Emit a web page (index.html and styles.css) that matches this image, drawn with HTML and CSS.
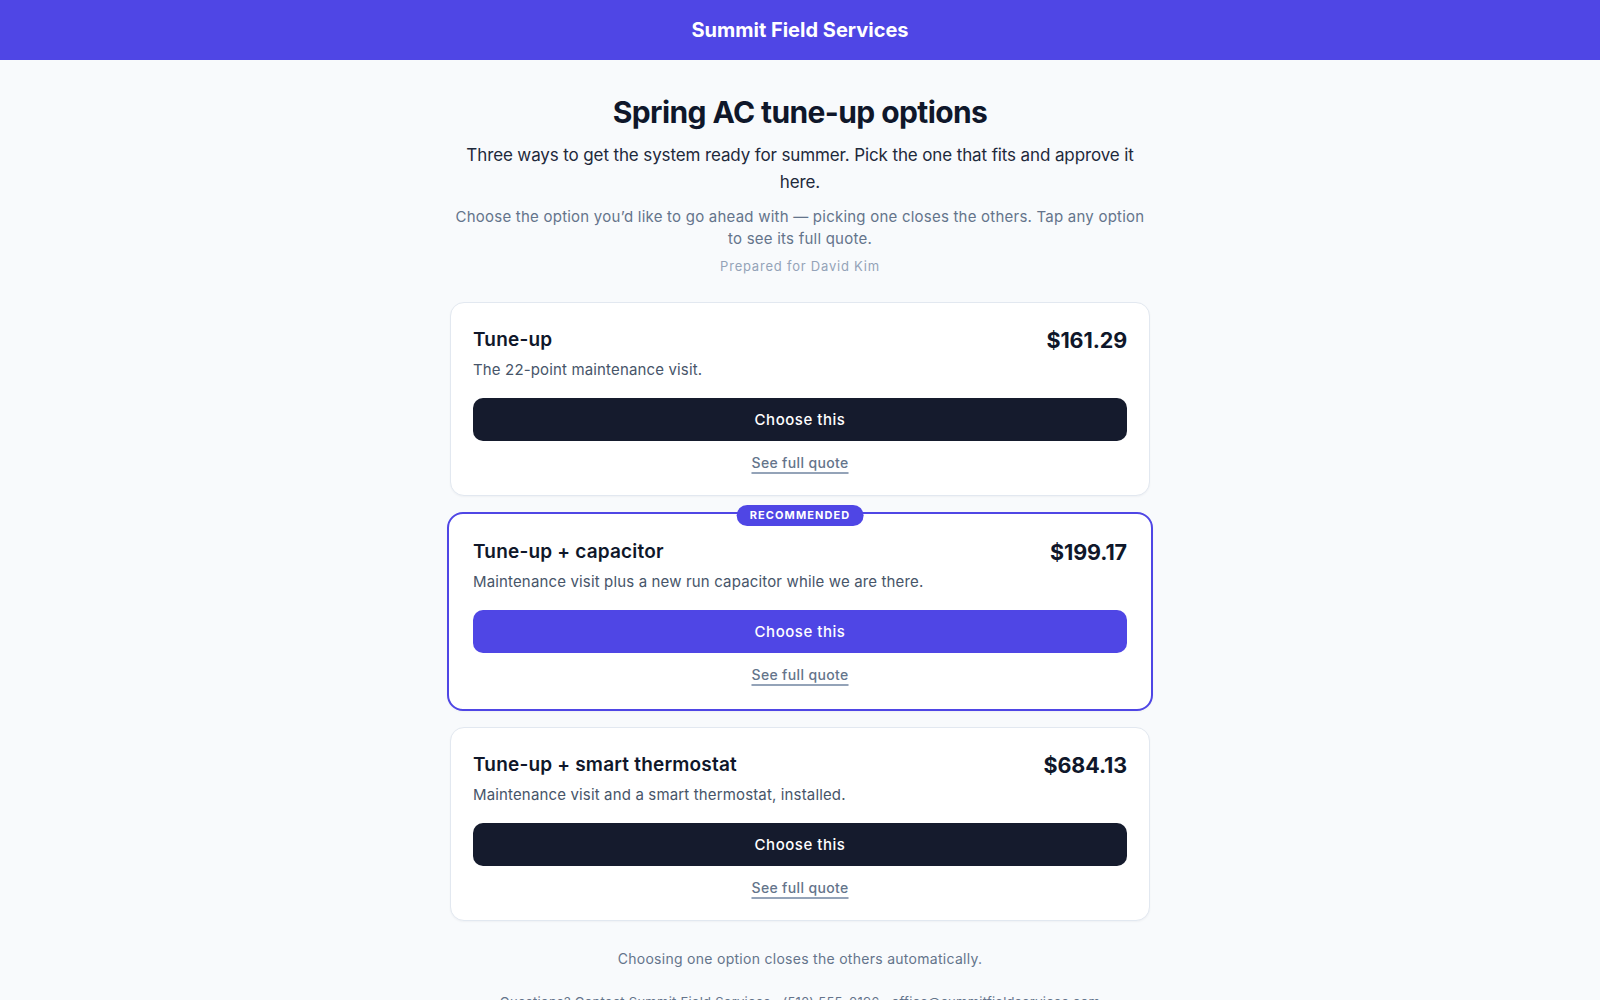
FILE: index.html
```html
<!DOCTYPE html>
<html lang="en">
<head>
<meta charset="utf-8">
<title>Spring AC tune-up options</title>
<link rel="stylesheet" href="styles.css">
</head>
<body>
<header class="topbar">
  <div class="brand">Summit Field Services</div>
</header>
<main class="page">
  <h1 class="title">Spring AC tune-up options</h1>
  <p class="lead">Three ways to get the system ready for summer. Pick the one that fits and approve it here.</p>
  <p class="note">Choose the option you’d like to go ahead with — picking one closes the others. Tap any option to see its full quote.</p>
  <p class="prepared">Prepared for David Kim</p>

  <section class="options">
    <article class="card">
      <div class="card-head">
        <h2 class="card-title">Tune-up</h2>
        <div class="price">$161.29</div>
      </div>
      <p class="desc">The 22-point maintenance visit.</p>
      <button class="choose">Choose this</button>
      <a class="quote-link" href="#">See full quote</a>
    </article>

    <article class="card card-rec">
      <span class="badge">RECOMMENDED</span>
      <div class="card-head">
        <h2 class="card-title">Tune-up + capacitor</h2>
        <div class="price">$199.17</div>
      </div>
      <p class="desc">Maintenance visit plus a new run capacitor while we are there.</p>
      <button class="choose choose-primary">Choose this</button>
      <a class="quote-link" href="#">See full quote</a>
    </article>

    <article class="card">
      <div class="card-head">
        <h2 class="card-title">Tune-up + smart thermostat</h2>
        <div class="price">$684.13</div>
      </div>
      <p class="desc">Maintenance visit and a smart thermostat, installed.</p>
      <button class="choose">Choose this</button>
      <a class="quote-link" href="#">See full quote</a>
    </article>
  </section>

  <p class="closing">Choosing one option closes the others automatically.</p>
  <p class="contact">Questions? Contact Summit Field Services · (512) 555-0196 · office@summitfieldservices.com</p>
</main>
</body>
</html>
```

FILE: styles.css
```css
* { box-sizing: border-box; }

html, body {
  margin: 0;
  padding: 0;
}

body {
  background: #f8fafc;
  font-family: Inter, "Noto Sans", "Liberation Sans", sans-serif;
  color: #0f172a;
}

.topbar {
  height: 60px;
  background: #4f46e5;
  display: flex;
  align-items: center;
  justify-content: center;
}

.brand {
  color: #ffffff;
  font-size: 20px;
  font-weight: 700;
  letter-spacing: 0;
}

.page {
  width: 700px;
  margin: 0 auto;
  padding-top: 34px;
  display: flex;
  flex-direction: column;
  align-items: stretch;
  text-align: center;
}

.title {
  margin: 0;
  font-size: 30px;
  line-height: 36px;
  font-weight: 700;
  letter-spacing: -0.02em;
  color: #0f172a;
}

.lead {
  margin: 12px 0 0;
  font-size: 17px;
  line-height: 27px;
  letter-spacing: -0.12px;
  color: #1e293b;
}

.note {
  margin: 10px 0 0;
  font-size: 15px;
  line-height: 22px;
  letter-spacing: 0.015em;
  color: #64748b;
}

.prepared {
  margin: 6px 0 0;
  font-size: 13px;
  line-height: 20px;
  color: #94a3b8;
  letter-spacing: 0.06em;
}

.options {
  margin-top: 26px;
  display: flex;
  flex-direction: column;
  gap: 16px;
}

.card {
  position: relative;
  background: #ffffff;
  border: 1px solid #e2e8f0;
  border-radius: 14px;
  padding: 22px;
  display: flex;
  flex-direction: column;
  align-items: stretch;
  text-align: left;
  box-shadow: 0 1px 2px rgba(15, 23, 42, 0.04);
}

.card-rec {
  margin: 0 -3px;
  border: 2px solid #4f46e5;
  border-radius: 16px;
  padding: 23px 24px 24px;
}

.badge {
  position: absolute;
  top: -9px;
  left: 50%;
  transform: translateX(-50%);
  height: 21px;
  padding: 0 13px;
  border-radius: 999px;
  background: #4f46e5;
  color: #ffffff;
  font-size: 11px;
  font-weight: 700;
  letter-spacing: 0.1em;
  line-height: 21px;
  white-space: nowrap;
}

.card-head {
  display: flex;
  align-items: center;
  justify-content: space-between;
  height: 30px;
}

.card-title {
  margin: 0;
  font-size: 19px;
  font-weight: 600;
  line-height: 26px;
  letter-spacing: 0.01em;
  color: #0f172a;
}

.price {
  font-size: 21.5px;
  font-weight: 700;
  line-height: 28px;
  letter-spacing: -0.005em;
  color: #0f172a;
}

.desc {
  margin: 4px 0 0;
  font-size: 15px;
  line-height: 22px;
  letter-spacing: 0.01em;
  color: #475569;
}

.choose {
  margin-top: 17px;
  height: 43px;
  border: none;
  border-radius: 10px;
  background: #151b2d;
  color: #ffffff;
  font-family: inherit;
  font-size: 15px;
  font-weight: 500;
  letter-spacing: 0.035em;
  cursor: pointer;
}

.choose-primary {
  background: #4f46e5;
}

.quote-link {
  align-self: center;
  margin-top: 12px;
  font-size: 14px;
  line-height: 20px;
  font-weight: 500;
  letter-spacing: 0.025em;
  color: #64748b;
  text-decoration: underline;
  text-decoration-color: #94a3b8;
  text-decoration-thickness: 1.5px;
  text-underline-offset: 4px;
}

.closing {
  margin: 28px 0 0;
  font-size: 14px;
  line-height: 20px;
  letter-spacing: 0.02em;
  color: #64748b;
}

.contact {
  margin: 23px 0 0;
  font-size: 13px;
  line-height: 20px;
  letter-spacing: 0.02em;
  color: #64748b;
  white-space: nowrap;
}
```
